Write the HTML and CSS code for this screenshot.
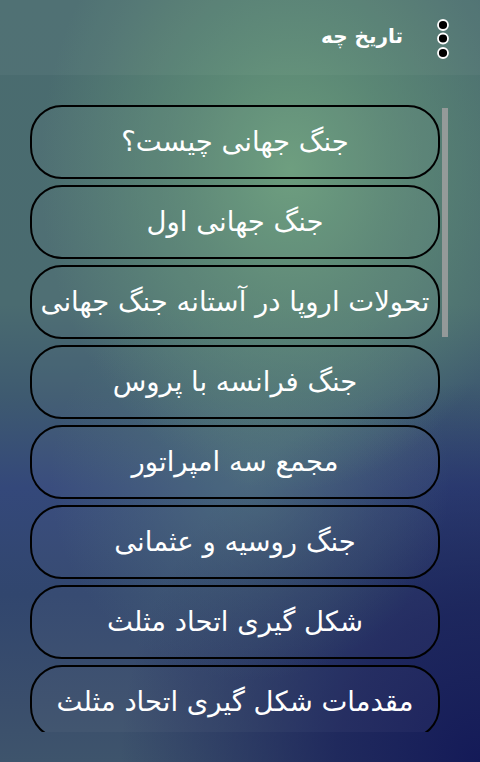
FILE: index.html
```html
<!DOCTYPE html>
<html lang="fa" dir="rtl">
<head>
<meta charset="utf-8">
<title>تاریخ چه</title>
<link rel="stylesheet" href="styles.css">
</head>
<body>
<div class="app">
  <header class="toolbar">
    <div class="menu" aria-label="menu">
      <svg width="14" height="42" viewBox="0 0 14 42">
        <circle cx="7" cy="7" r="5" fill="#000" stroke="#fff" stroke-width="1.8"/>
        <circle cx="7" cy="20.5" r="5" fill="#000" stroke="#fff" stroke-width="1.8"/>
        <circle cx="7" cy="35" r="5" fill="#000" stroke="#fff" stroke-width="1.8"/>
      </svg>
    </div>
    <h1 class="title">تاریخ چه</h1>
  </header>
  <main class="list">
    <div class="items">
      <button class="item">جنگ جهانی چیست؟</button>
      <button class="item">جنگ جهانی اول</button>
      <button class="item">تحولات اروپا در آستانه جنگ جهانی</button>
      <button class="item">جنگ فرانسه با پروس</button>
      <button class="item">مجمع سه امپراتور</button>
      <button class="item">جنگ روسیه و عثمانی</button>
      <button class="item">شکل گیری اتحاد مثلث</button>
      <button class="item">مقدمات شکل گیری اتحاد مثلث</button>
    </div>
    <div class="scrollbar"></div>
  </main>
</div>
</body>
</html>
```
FILE: styles.css
```css
html, body {
  margin: 0;
  padding: 0;
}
body {
  width: 480px;
  height: 762px;
  overflow: hidden;
  font-family: "DejaVu Sans", sans-serif;
}
.app {
  width: 480px;
  height: 762px;
  position: relative;
  overflow: hidden;
  background:
    radial-gradient(ellipse 250px 320px at 290px 170px, rgba(108,158,124,0.95) 0%, rgba(100,150,120,0.65) 40%, rgba(90,130,120,0) 100%),
    radial-gradient(ellipse 200px 200px at 250px 480px, rgba(88,128,122,0.5) 0%, rgba(88,128,122,0) 100%),
    radial-gradient(ellipse 360px 380px at 480px 762px, rgba(20,26,88,1) 0%, rgba(22,28,88,0.75) 40%, rgba(22,28,88,0) 100%),
    linear-gradient(180deg, #4a6c6f 0%, #4a6b70 40%, #3e5a70 52%, #34487a 64%, #31466e 78%, #3a4e6c 92%, #3e546c 100%);
}
.toolbar {
  height: 75px;
  display: flex;
  align-items: center;
  background: rgba(255,255,255,0.035);
}
.menu {
  width: 14px;
  height: 42px;
  margin-right: 30px;
  margin-top: 2px;
  margin-left: 33px;
}
.menu svg {
  display: block;
}
.title {
  margin: 0;
  color: #fff;
  font-size: 20px;
  font-weight: bold;
  line-height: 1;
  padding-bottom: 4px;
}
.list {
  padding-top: 30px;
  overflow: hidden;
  box-sizing: border-box;
  height: 657px;
  position: relative;
}
.items {
  display: flex;
  flex-direction: column;
  gap: 6px;
  margin-right: 40px;
  margin-left: 30px;
}
.item {
  height: 74px;
  flex: none;
  box-sizing: border-box;
  border: 2px solid #000;
  border-radius: 32px;
  background: rgba(255,255,255,0.03);
  color: #fff;
  font-family: "DejaVu Sans", sans-serif;
  font-size: 27.5px;
  padding: 0 0 2px;
  text-align: center;
  white-space: nowrap;
}
.scrollbar {
  position: absolute;
  top: 33px;
  right: 32px;
  width: 6px;
  height: 229px;
  background: rgba(160,160,160,0.85);
}
```
